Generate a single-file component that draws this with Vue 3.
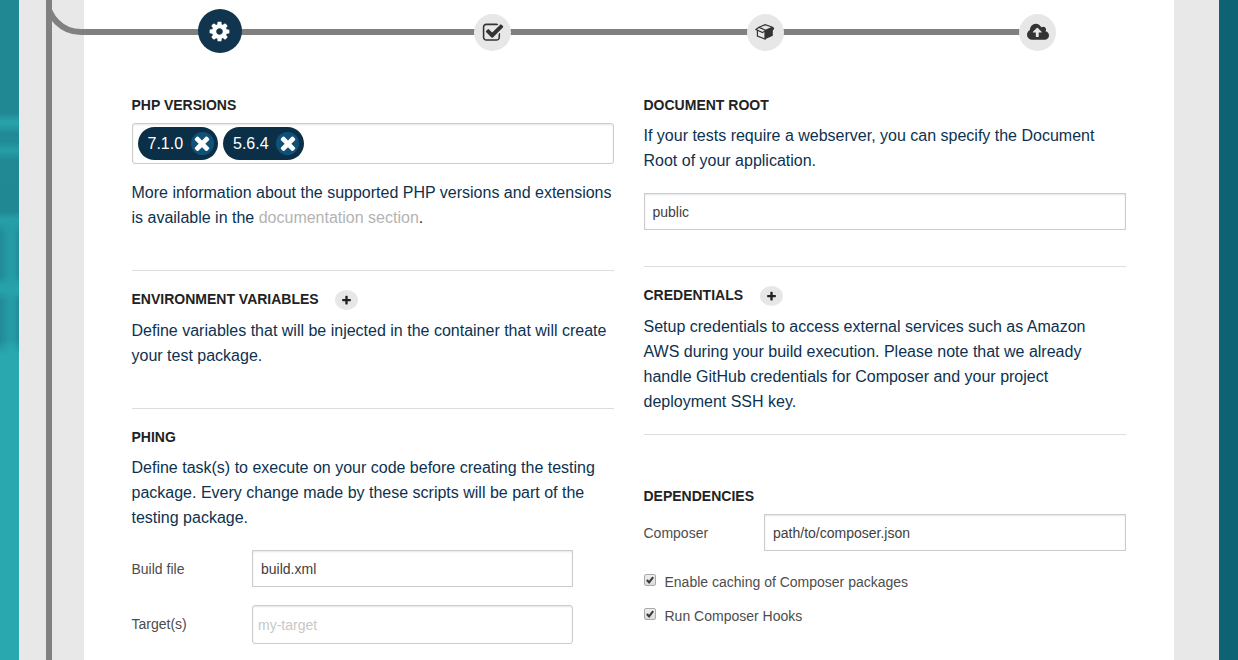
<script setup>
import { ref } from 'vue'

const icons = {
  cog: { box: '0 0 1792 1792', d: 'M1152 896q0-106-75-181t-181-75-181 75-75 181 75 181 181 75 181-75 75-181zm512-109v222q0 12-8 23t-20 13l-185 28q-19 54-39 91 35 50 107 138 10 12 10 25t-9 23q-27 37-99 108t-94 71q-12 0-26-9l-138-108q-44 23-91 38-16 136-29 186-7 28-36 28h-222q-14 0-24.5-8.5t-11.5-21.5l-28-184q-49-16-90-37l-141 107q-10 9-25 9-14 0-25-11-126-114-165-168-7-10-7-23 0-12 8-23 15-21 51-66.5t54-70.5q-27-50-41-99l-183-27q-13-2-21-12.5t-8-23.5v-222q0-12 8-23t19-13l186-28q14-46 39-92-40-57-107-138-10-12-10-24 0-10 9-23 26-36 98.5-107.5t94.5-71.5q13 0 26 10l138 107q44-23 91-38 16-136 29-186 7-28 36-28h222q14 0 24.5 8.5t11.5 21.5l28 184q49 16 90 37l142-107q9-9 24-9 13 0 25 10 129 119 165 170 7 8 7 22 0 12-8 23-15 21-51 66.5t-54 70.5q26 50 41 98l183 28q13 2 21 12.5t8 23.5z' },
  check: { box: '0 0 1792 1792', d: 'M1472 930v318q0 119-84.5 203.5t-203.5 84.5h-832q-119 0-203.5-84.5t-84.5-203.5v-832q0-119 84.5-203.5t203.5-84.5h832q63 0 117 25 15 7 18 23 3 17-9 29l-49 49q-10 10-23 10-3 0-9-2-23-6-45-6h-832q-66 0-113 47t-47 113v832q0 66 47 113t113 47h832q66 0 113-47t47-113v-254q0-13 9-22l64-64q10-10 23-10 6 0 12 3 20 8 20 29zm231-489l-814 814q-24 24-57 24t-57-24l-430-430q-24-24-24-57t24-57l110-110q24-24 57-24t57 24l263 263 647-647q24-24 57-24t57 24l110 110q24 24 24 57t-24 57z' },
  upload: { box: '-64 0 1920 1792', d: 'M1216 864q0-14-9-23l-352-352q-9-9-23-9t-23 9l-351 351q-10 12-10 24 0 14 9 23t23 9h224v352q0 13 9.5 22.5t22.5 9.5h192q13 0 22.5-9.5t9.5-22.5v-352h224q13 0 22.5-9.5t9.5-22.5zm640 288q0 159-112.5 271.5t-271.5 112.5h-1088q-185 0-316.5-131.5t-131.5-316.5q0-130 70-240t188-165q-2-30-2-43 0-212 150-362t362-150q156 0 285.5 87t188.5 231q71-62 166-62 106 0 181 75t75 181q0 76-41 138 130 31 213.5 135.5t83.5 238.5z' },
}
const times = 'M1490 1322q0 40-28 68l-136 136q-28 28-68 28t-68-28l-294-294-294 294q-28 28-68 28t-68-28l-136-136q-28-28-28-68t28-68l294-294-294-294q-28-28-28-68t28-68l136-136q28-28 68-28t68 28l294 294 294-294q28-28 68-28t68 28l136 136q28 28 28 68t-28 68l-294 294 294 294q28 28 28 68z'
const plus = 'M1600 736v192q0 40-28 68t-68 28h-416v416q0 40-28 68t-68 28h-192q-40 0-68-28t-28-68v-416h-416q-40 0-68-28t-28-68v-192q0-40 28-68t68-28h416v-416q0-40 28-68t68-28h192q40 0 68 28t28 68v416h416q40 0 68 28t28 68z'

const steps = ['cog', 'check', 'box', 'upload']
const versions = ref(['7.1.0', '5.6.4'])
const docRoot = ref('public')
const buildFile = ref('build.xml')
const target = ref('')
const composer = ref('path/to/composer.json')
const options = ref([
  { label: 'Enable caching of Composer packages', on: true },
  { label: 'Run Composer Hooks', on: true },
])
</script>

<template>
  <div class="page">
    <div class="backdrop"></div>
    <aside class="rail">
      <div class="trunk"></div>
    </aside>
    <svg class="branch" width="44" height="40" viewBox="46 0 44 40">
      <path d="M47 -2A34 34 0 0 0 81 32H90" fill="none" stroke="#808080" stroke-width="6" />
    </svg>
    <main class="panel">
      <nav class="stepper">
        <div v-for="(s, i) in steps" :key="s" class="step" :class="[s, { active: i === 0 }]">
          <svg v-if="s === 'box'" class="glyph" viewBox="0 0 20 18">
            <path d="M4 4.3L10.3 1.6L17.4 4.2L10.6 7.2Z" fill="none" stroke="#333" stroke-width="1.2" />
            <path d="M4 4.3L1 6.6L7.6 9.6L10.6 7.2M17.4 4.2L18.8 6" fill="none" stroke="#333" stroke-width="1.2" />
            <path d="M2.4 7.4V13L10 16V8" fill="none" stroke="#333" stroke-width="1.2" />
            <path d="M10 7.4L17.2 4.3L19 6.4L17.8 7.2V12.8L10 16.3Z" fill="#333" />
          </svg>
          <svg v-else class="glyph" :viewBox="icons[s].box"><path :d="icons[s].d" fill="currentColor" /></svg>
        </div>
      </nav>
      <div class="columns">
        <div class="column">
          <section>
            <h2>PHP VERSIONS</h2>
            <div class="tags">
              <span v-for="v in versions" :key="v" class="tag">{{ v }}
                <button class="remove"><svg viewBox="0 0 1792 1792"><path :d="times" fill="#fff" /></svg></button>
              </span>
            </div>
            <p class="after-tags">More information about the supported PHP versions and extensions is available in the <a>documentation section</a>.</p>
          </section>
          <section class="env">
            <h2>ENVIRONMENT VARIABLES <button class="add"><svg viewBox="0 0 1792 1792"><path :d="plus" fill="#222" /></svg></button></h2>
            <p>Define variables that will be injected in the container that will create your test package.</p>
          </section>
          <section class="phing">
            <h2>PHING</h2>
            <p>Define task(s) to execute on your code before creating the testing package. Every change made by these scripts will be part of the testing package.</p>
            <div class="field build"><label>Build file</label><input v-model="buildFile" type="text" /></div>
            <div class="field target"><label>Target(s)</label><input v-model="target" type="text" placeholder="my-target" /></div>
          </section>
        </div>
        <div class="column">
          <section>
            <h2>DOCUMENT ROOT</h2>
            <p>If your tests require a webserver, you can specify the Document Root of your application.</p>
            <input v-model="docRoot" class="root" type="text" />
          </section>
          <section class="credentials">
            <h2>CREDENTIALS <button class="add"><svg viewBox="0 0 1792 1792"><path :d="plus" fill="#222" /></svg></button></h2>
            <p>Setup credentials to access external services such as Amazon AWS during your build execution. Please note that we already handle GitHub credentials for Composer and your project deployment SSH key.</p>
          </section>
          <section class="dependencies">
            <h2>DEPENDENCIES</h2>
            <div class="field"><label>Composer</label><input v-model="composer" type="text" /></div>
            <div class="checks">
              <label v-for="o in options" :key="o.label" class="option">
                <input v-model="o.on" type="checkbox" />
                <svg class="tick" viewBox="0 0 12 12"><path v-if="o.on" d="M2.2 6.1L4.9 8.8L9.8 2.6" fill="none" stroke="#3c3c3c" stroke-width="2.5" /></svg>
                <span>{{ o.label }}</span>
              </label>
            </div>
          </section>
        </div>
      </div>
    </main>
    <div class="gutter"></div>
  </div>
</template>

<style>
body { margin: 0; overflow: hidden; }
</style>

<style scoped>
.page {
  position: relative;
  display: flex;
  height: 660px;
  overflow: hidden;
  background: #0d6374;
  font-family: "Liberation Sans", Arial, sans-serif;
  color: #222;
}
.page * { box-sizing: border-box; }
.backdrop {
  width: 19px;
  background:
    linear-gradient(180deg, rgba(37, 158, 167, 0) 214px, #259ea7 220px, #259ea7 222px, rgba(37, 158, 167, 0) 234px, rgba(37, 158, 167, 0) 276px, #27a2aa 286px, #27a2aa 291px, rgba(37, 158, 167, 0) 301px, rgba(37, 158, 167, 0) 340px, #29a8af 355px, #29a8af 660px),
    linear-gradient(90deg, rgba(32, 136, 147, .85) 0, rgba(32, 136, 147, 0) 9px, rgba(32, 136, 147, 0) 14px, rgba(32, 136, 147, .8) 19px) 0 220px / 19px 135px no-repeat,
    linear-gradient(180deg, #208893 0, #208893 113px, #27a1aa 121px, #27a1aa 124px, #208994 134px, #208b96 142px, #259ca5 149px, #259ca5 152px, #208994 160px, #208893 211px, #249ba5 220px, #249ba5 340px, #29a8af 357px, #29a8af 660px);
}
.rail { width: 65px; padding-left: 27px; background: #e8e8e8; }
.trunk { width: 6px; height: 100%; background: #808080; }
.branch { position: absolute; left: 46px; top: 0; }
.panel { width: 1090px; background: #fff; }
.gutter { width: 45px; background: #e8e8e8; }

.stepper {
  display: flex;
  justify-content: space-between;
  align-items: center;
  height: 64px;
  padding: 0 118px 0 117.5px;
  background: linear-gradient(#808080, #808080) 0 29px / 953px 6px no-repeat;
}
.step {
  display: flex;
  align-items: center;
  justify-content: center;
  width: 37px;
  height: 37px;
  margin-top: 1px;
  border-radius: 50%;
  background: #e7e7e7;
  color: #333;
}
.step.active { width: 44px; height: 44px; margin: -2px -3.5px 0; background: #12354f; color: #fff; }
.glyph { display: block; width: 22px; height: 22px; }
.cog .glyph { width: 23px; height: 23px; margin: 1px 1px 0 0; }
.check .glyph { margin-left: 1px; }
.box .glyph { width: 20px; height: 18px; margin-top: -2px; }
.upload .glyph { width: 22px; height: 21px; margin-top: -1px; }

.columns { display: grid; grid-template-columns: 482px 482px; gap: 30px; padding: 31px 48px 0 47.5px; }
h2 { display: flex; align-items: center; height: 20px; margin: 0; font-size: 14px; line-height: 20px; font-weight: 700; color: #222; }
p { margin: 8px 0 0; font-size: 16px; line-height: 25px; color: #0c3250; }
a { color: #b3b3b3; }
section + section { border-top: 1px solid #ddd; }
button { display: flex; align-items: center; justify-content: center; padding: 0; border: 0; }

.tags { display: flex; gap: 5px; height: 41px; margin-top: 8px; padding: 3px 5px; border: 1px solid #ccc; border-radius: 3px; box-shadow: inset 0 1px 2px rgba(0, 0, 0, .1); }
.tag { display: flex; align-items: center; justify-content: space-between; width: 80.5px; height: 33px; padding: 0 4.5px 0 10px; border-radius: 17px; background: #0c2f48; color: #fff; font-size: 16px; }
.remove { width: 23px; height: 23px; border-radius: 50%; background: #10517a; }
.remove svg { width: 22px; height: 22px; flex: none; margin-bottom: 2px; }
.after-tags { margin-top: 16px; }
.add { width: 23px; height: 20px; margin-left: 16.5px; margin-top: 2px; border-radius: 50%; background: #e7e7e7; }
.add svg { width: 11px; height: 11px; }

.env { margin-top: 40px; padding-top: 18px; }
.env p { margin-top: 9px; }
.phing { margin-top: 40px; padding-top: 18px; }
.credentials { margin-top: 36px; padding-top: 18px; }
.credentials p { margin-top: 9px; padding-right: 24px; }
section.dependencies { margin-top: 20px; padding-top: 51px; }

input[type="text"] { display: block; width: 100%; height: 37px; padding: 0 8px; border: 1px solid #ccc; border-radius: 0; outline: 0; background: #fff; box-shadow: inset 0 1px 2px rgba(0, 0, 0, .1); font-family: inherit; font-size: 14px; color: #404040; }
input.root { margin-top: 20px; }
.field { display: grid; grid-template-columns: 120.5px 1fr; align-items: center; margin-top: 8px; font-size: 14px; color: #4d4d4d; }
.build { width: 441.5px; margin-top: 20px; }
.target { width: 441.5px; margin-top: 18px; }
.target label { margin-top: -2px; }
.target input[type="text"] { height: 39px; padding: 1px 5px 0; border-radius: 3px; }
.target input::placeholder { color: #c8c8c8; opacity: 1; }

.checks { display: flex; flex-direction: column; gap: 14px; margin-top: 21px; }
.option { display: flex; align-items: center; height: 20px; font-size: 14px; color: #4d4d4d; }
.option input { width: 0; height: 0; margin: 0; opacity: 0; }
.tick { width: 12px; height: 12px; margin: -5px 9px 0 0; border: 1px solid #aaa; border-radius: 2px; background: linear-gradient(#eee, #dcdcdc); overflow: visible; }
</style>
